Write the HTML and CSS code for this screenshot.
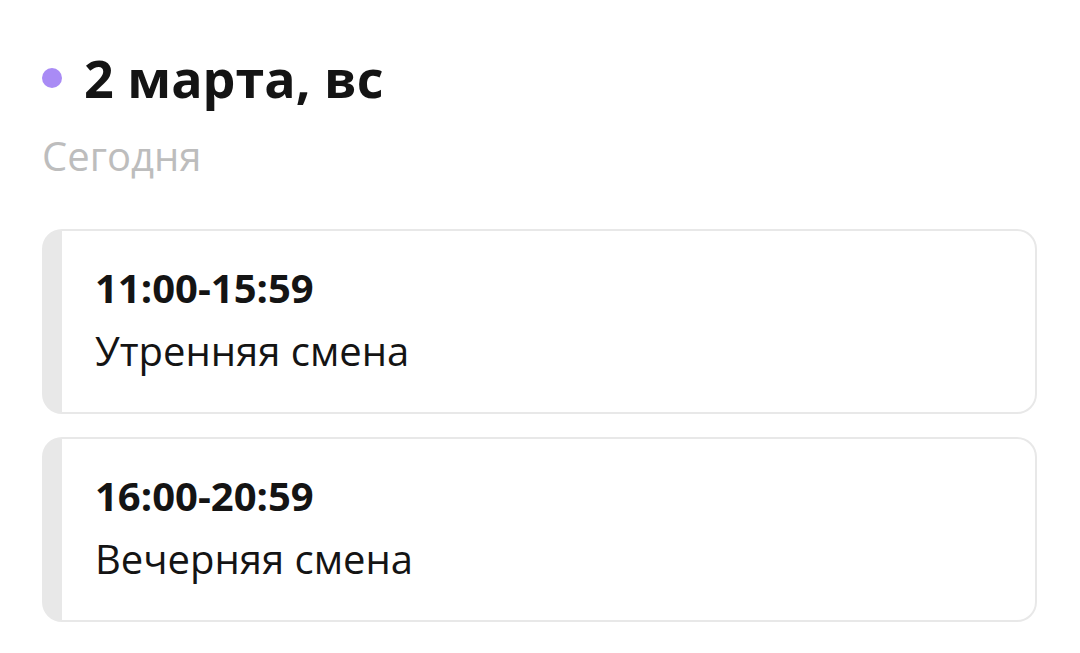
FILE: index.html
```html
<!DOCTYPE html>
<html lang="ru">
<head>
<meta charset="utf-8">
<link rel="stylesheet" href="styles.css">
</head>
<body>
<main class="page">
  <header class="day">
    <div class="day-title">
      <span class="dot"></span>
      <h1>2 марта, вс</h1>
    </div>
    <div class="day-sub">Сегодня</div>
  </header>
  <section class="shifts">
    <div class="shift">
      <div class="shift-time">11:00-15:59</div>
      <div class="shift-name">Утренняя смена</div>
    </div>
    <div class="shift">
      <div class="shift-time">16:00-20:59</div>
      <div class="shift-name">Вечерняя смена</div>
    </div>
  </section>
</main>
</body>
</html>
```
FILE: styles.css
```css
html, body {
  margin: 0;
  padding: 0;
  background: #ffffff;
}
body {
  font-family: "Open Sans", "Noto Sans", sans-serif;
  color: #141414;
}
.page {
  padding: 44px 43px 0 42px;
}
.day-title {
  display: flex;
  align-items: center;
  gap: 22px;
}
.dot {
  width: 20px;
  height: 20px;
  border-radius: 50%;
  background: #a98bf5;
  flex: none;
}
.day-title h1 {
  margin: 0;
  font-size: 52px;
  font-weight: 700;
  line-height: 68px;
  color: #141414;
}
.day-sub {
  margin-top: 17px;
  font-size: 40px;
  line-height: 54px;
  color: #bdbdbd;
}
.shifts {
  margin-top: 46px;
  display: flex;
  flex-direction: column;
  gap: 23px;
}
.shift {
  border: 2px solid #e8e8e8;
  border-left: 20px solid #e8e8e8;
  border-radius: 20px;
  height: 185px;
  box-sizing: border-box;
  padding: 30px 34px 0 33px;
}
.shift-time {
  font-size: 40px;
  font-weight: 700;
  line-height: 54px;
  color: #141414;
}
.shift-name {
  margin-top: 9px;
  font-size: 40px;
  line-height: 54px;
  color: #141414;
}
```
